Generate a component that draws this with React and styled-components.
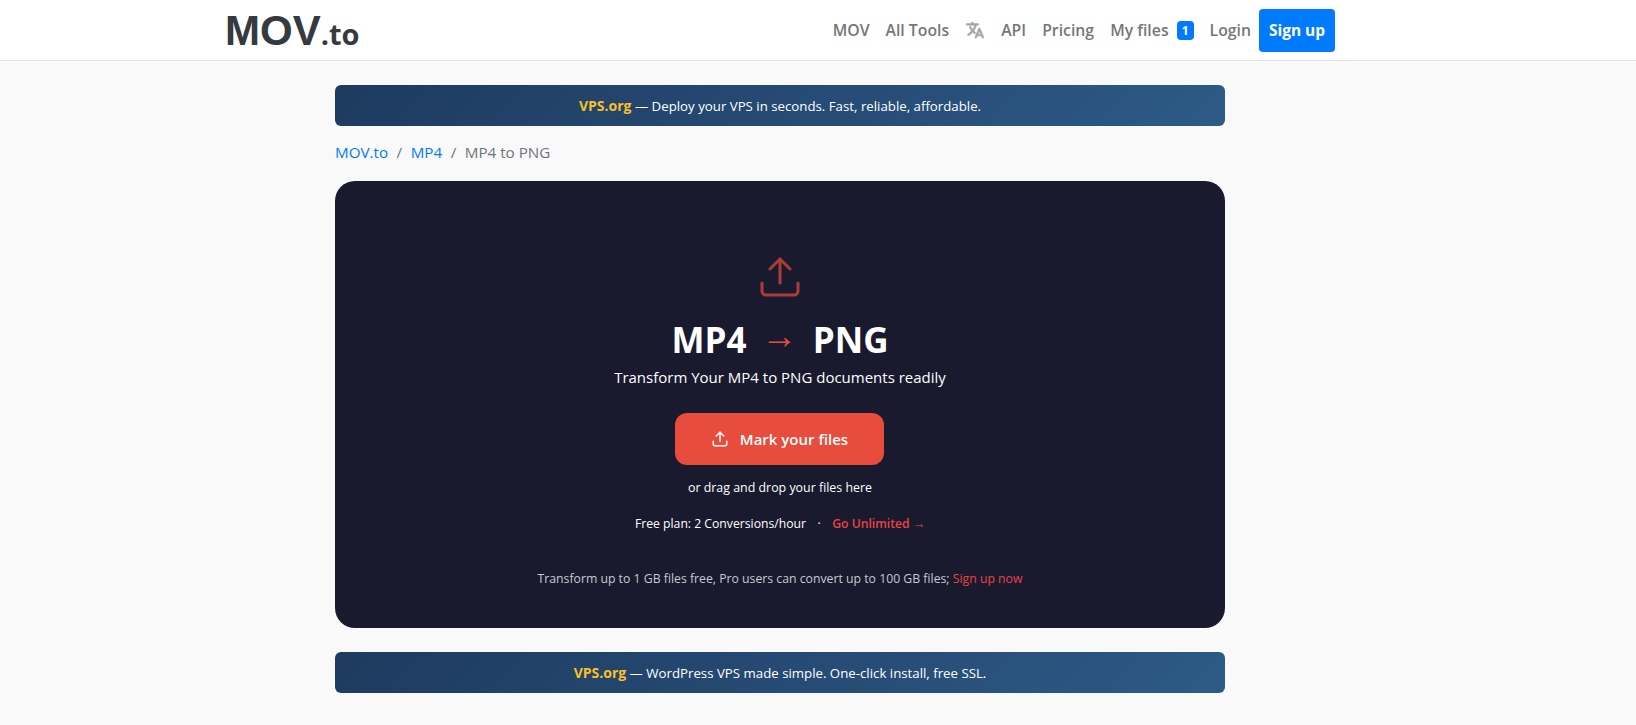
import styled, { createGlobalStyle } from "styled-components";
import { Upload } from "lucide-react";
import { IoLanguage } from "react-icons/io5";

const GlobalStyle = createGlobalStyle`
    * {
        box-sizing: border-box;
    }

    body {
        margin: 0;
        background: #f9f9f9;
        font-family: "Open Sans", "Noto Sans", sans-serif;
    }

    a {
        text-decoration: none;
    }
`;

function Banner({ text }) {
    return (
        <BannerBar>
            <b>VPS.org</b> — {text}
        </BannerBar>
    );
}

function App() {
    return (
        <>
            <GlobalStyle />
            <Header>
                <HeaderInner>
                    <Logo href="#">
                        MOV<small>.to</small>
                    </Logo>
                    <Nav>
                        <NavLink href="#">MOV</NavLink>
                        <NavLink href="#">All Tools</NavLink>
                        <LangIcon>
                            <IoLanguage size={20} />
                        </LangIcon>
                        <NavLink href="#">API</NavLink>
                        <NavLink href="#">Pricing</NavLink>
                        <NavLink href="#">
                            My files <Badge>1</Badge>
                        </NavLink>
                        <NavLink href="#">Login</NavLink>
                        <SignUp href="#">Sign up</SignUp>
                    </Nav>
                </HeaderInner>
            </Header>
            <Main>
                <Banner text="Deploy your VPS in seconds. Fast, reliable, affordable." />
                <Breadcrumb>
                    <a href="#">MOV.to</a>
                    <Sep>/</Sep>
                    <a href="#">MP4</a>
                    <Sep>/</Sep>
                    <span>MP4 to PNG</span>
                </Breadcrumb>
                <Card>
                    <BigIcon size={48} strokeWidth={1.5} />
                    <Title>
                        MP4 <Arrow>→</Arrow> PNG
                    </Title>
                    <Subtitle>Transform Your MP4 to PNG documents readily</Subtitle>
                    <PickButton>
                        <Upload size={18} strokeWidth={2} />
                        Mark your files
                    </PickButton>
                    <DropHint>or drag and drop your files here</DropHint>
                    <PlanLine>
                        Free plan: 2 Conversions/hour
                        <Dot>·</Dot>
                        <UnlimitedLink href="#">Go Unlimited →</UnlimitedLink>
                    </PlanLine>
                    <LimitNote>
                        Transform up to 1 GB files free, Pro users can convert up to 100 GB files;{" "}
                        <a href="#">Sign up now</a>
                    </LimitNote>
                </Card>
                <Banner text="WordPress VPS made simple. One-click install, free SSL." />
            </Main>
        </>
    );
}

const Header = styled.header`
    height: 61px;
    background: #fff;
    border-bottom: 1px solid #e3e3e8;
    padding-right: 76px;
`;

const HeaderInner = styled.div`
    width: 1110px;
    height: 60px;
    margin: 0 auto;
    display: flex;
    align-items: center;
    justify-content: space-between;
`;

const Logo = styled.a`
    padding-top: 3px;
    font-family: "Liberation Sans", Arial, sans-serif;
    font-size: 42px;
    font-weight: 700;
    color: #343a40;
    line-height: 57px;

    small {
        font-family: "Open Sans", sans-serif;
        font-size: 29px;
        font-weight: 700;
    }
`;

const Nav = styled.nav`
    display: flex;
    align-items: center;
    gap: 16px;
`;

const NavLink = styled.a`
    font-size: 15.8px;
    font-weight: 600;
    color: #777;
    display: flex;
    align-items: center;
    gap: 8px;
`;

const LangIcon = styled.span`
    display: flex;
    color: #a5a5a5;

    svg {
        stroke: currentColor;
        stroke-width: 14px;
    }
`;

const Badge = styled.span`
    width: 17px;
    height: 19px;
    border-radius: 4px;
    background: #007bff;
    color: #fff;
    font-size: 12px;
    font-weight: 700;
    display: flex;
    align-items: center;
    justify-content: center;
`;

const SignUp = styled.a`
    margin-left: -8px;
    width: 76px;
    height: 43px;
    border-radius: 4px;
    background: #007bff;
    color: #fff;
    font-size: 15.5px;
    font-weight: 700;
    display: flex;
    align-items: center;
    justify-content: center;
`;

const Main = styled.main`
    width: 890px;
    margin-left: 335px;
    padding: 24px 0 32px;
`;

const BannerBar = styled.div`
    height: 41px;
    border-radius: 6px;
    background: linear-gradient(135deg, #1e3a5f, #2d5a87);
    color: #fff;
    font-size: 13.25px;
    display: flex;
    align-items: center;
    justify-content: center;
    white-space: pre;

    b {
        color: #fbbf24;
        font-size: 14px;
        font-weight: 700;
    }
`;

const Breadcrumb = styled.div`
    height: 55px;
    padding-bottom: 3px;
    display: flex;
    align-items: center;
    font-size: 15.2px;
    color: #6c757d;

    a {
        color: #007bff;
    }
`;

const Sep = styled.span`
    margin: 0 8.5px;
`;

const Card = styled.section`
    height: 447px;
    margin-bottom: 24px;
    padding-top: 72px;
    border-radius: 20px;
    background: #1a1a2e;
    color: #fff;
    display: flex;
    flex-direction: column;
    align-items: center;
`;

const BigIcon = styled(Upload)`
    color: #e74c3c;
    opacity: 0.7;
    flex: none;
`;

const Title = styled.h1`
    margin: 15px 0 0;
    font-size: 35px;
    font-weight: 700;
    line-height: 48px;
    word-spacing: 6px;
`;

const Arrow = styled.span`
    color: #e74c3c;
    font-size: 36px;
    font-weight: 400;
    line-height: 0;
    vertical-align: 5px;
`;

const Subtitle = styled.p`
    margin: 1px 0 0;
    font-size: 15px;
    line-height: 24px;
`;

const PickButton = styled.button`
    margin: 24px 1px 0 0;
    width: 209px;
    height: 52px;
    border: 0;
    border-radius: 12px;
    background: #e74c3c;
    color: #fff;
    font-family: inherit;
    font-size: 15px;
    font-weight: 600;
    display: flex;
    align-items: center;
    justify-content: center;
    gap: 11px;
`;

const DropHint = styled.p`
    margin: 13px 0 0;
    font-size: 12.4px;
    line-height: 20px;
`;

const PlanLine = styled.p`
    margin: 16px 0 0;
    font-size: 12.2px;
    line-height: 20px;
`;

const Dot = styled.span`
    margin: 0 11.5px;
`;

const UnlimitedLink = styled.a`
    color: #ea4343;
    font-weight: 600;
`;

const LimitNote = styled.p`
    margin: 35px 0 0;
    font-size: 12.25px;
    line-height: 20px;
    color: #c8c8d0;

    a {
        color: #ea4343;
    }
`;

export default App;
